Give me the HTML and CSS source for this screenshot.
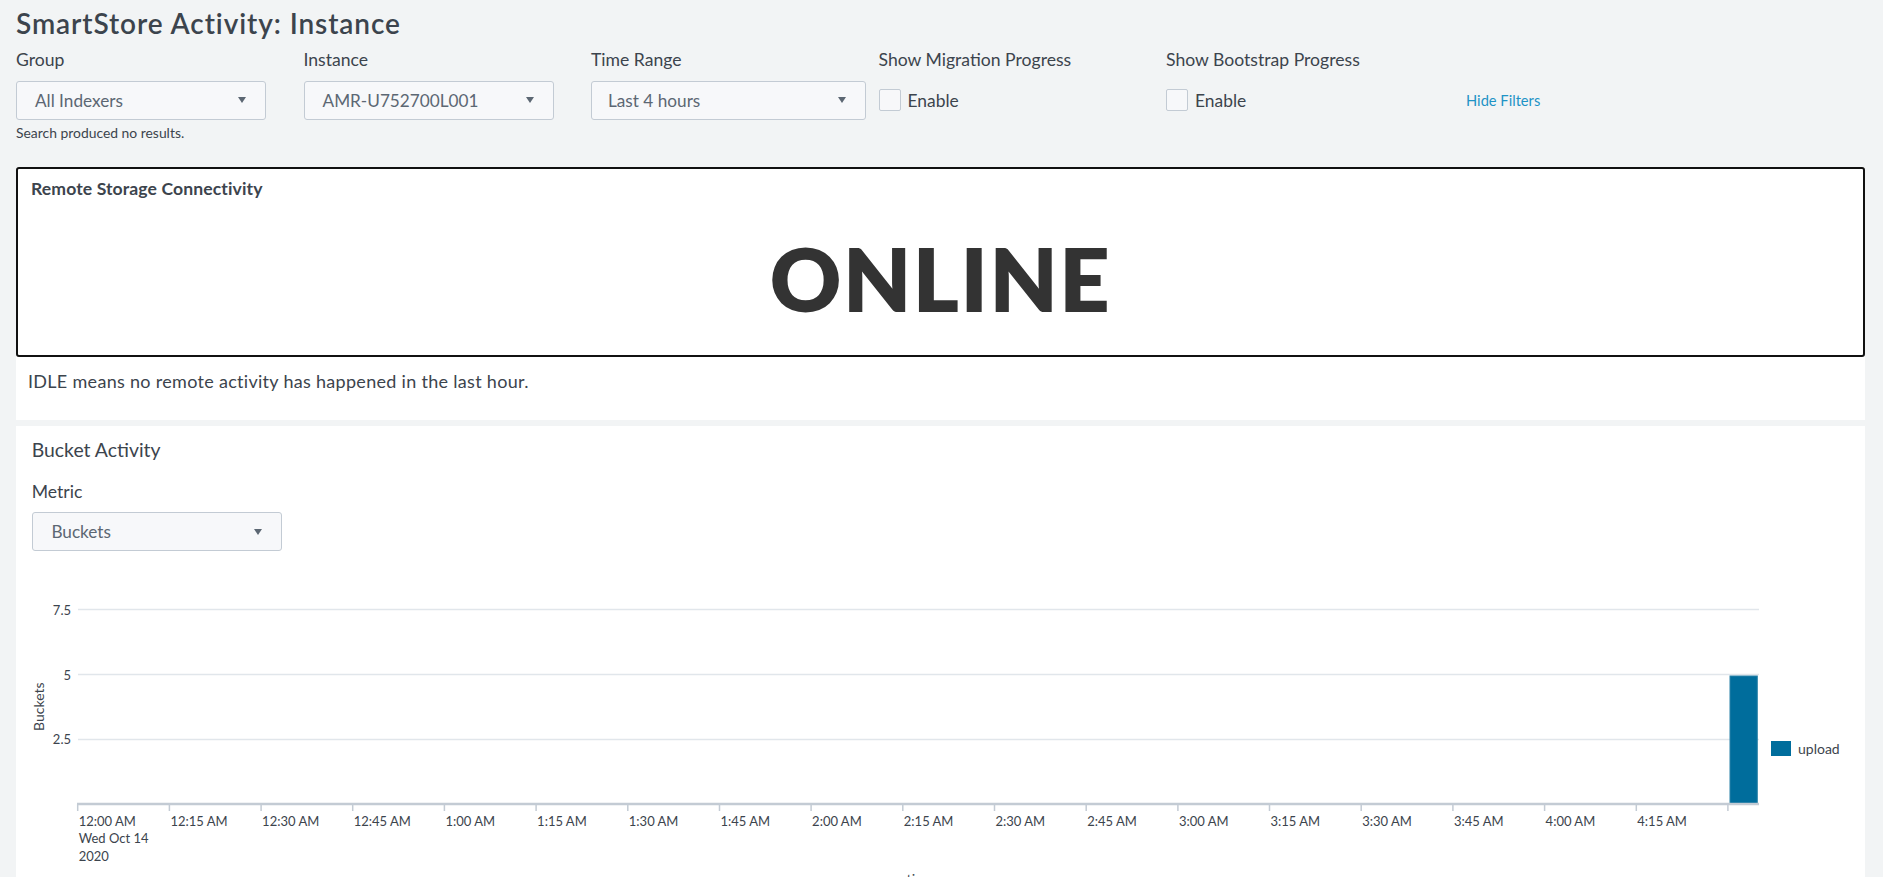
FILE: index.html
```html
<!DOCTYPE html>
<html lang="en">
<head>
<meta charset="utf-8">
<title>SmartStore Activity: Instance</title>
<link rel="stylesheet" href="styles.css">
</head>
<body>
<div class="page">
  <h1 class="title">SmartStore Activity: Instance</h1>

  <div class="filters">
    <div class="input">
      <div class="label">Group</div>
      <div class="dropdown"><span>All Indexers</span><span class="caret"></span></div>
      <div class="msg">Search produced no results.</div>
    </div>
    <div class="input">
      <div class="label">Instance</div>
      <div class="dropdown"><span>AMR-U752700L001</span><span class="caret"></span></div>
    </div>
    <div class="input">
      <div class="label">Time Range</div>
      <div class="dropdown dropdown--wide"><span>Last 4 hours</span><span class="caret"></span></div>
    </div>
    <div class="input">
      <div class="label">Show Migration Progress</div>
      <div class="check"><span class="box"></span><span>Enable</span></div>
    </div>
    <div class="input">
      <div class="label">Show Bootstrap Progress</div>
      <div class="check"><span class="box"></span><span>Enable</span></div>
    </div>
    <div class="hide-wrap"><a class="hide-filters">Hide Filters</a></div>
  </div>

  <section class="panel panel--status">
    <div class="single">
      <div class="single-title">Remote Storage Connectivity</div>
      <div class="single-value">ONLINE</div>
    </div>
    <p class="desc">IDLE means no remote activity has happened in the last hour.</p>
  </section>

  <section class="panel panel--chart">
    <h2 class="panel-title">Bucket Activity</h2>
    <div class="label label--metric">Metric</div>
    <div class="dropdown dropdown--metric"><span>Buckets</span><span class="caret"></span></div>
    <svg class="chart" width="1849" height="330" viewBox="0 0 1849 330">
      <g class="grid">
        <line x1="62" y1="39.5" x2="1743" y2="39.5"/>
        <line x1="62" y1="104.5" x2="1743" y2="104.5"/>
        <line x1="62" y1="169.5" x2="1743" y2="169.5"/>
      </g>
      <g class="ylab">
        <text x="55" y="45.3">7.5</text>
        <text x="55" y="110">5</text>
        <text x="55" y="174">2.5</text>
      </g>
      <text class="ytitle" transform="translate(28 136.7) rotate(-90)">Buckets</text>
      <rect class="bar" x="1714" y="106" width="27.3" height="128"/>
      <line class="axis" x1="61" y1="234" x2="1743" y2="234"/>
      <g class="ticks">
        <line x1="61.7" y1="234" x2="61.7" y2="241"/>
        <line x1="153.4" y1="234" x2="153.4" y2="241"/>
        <line x1="245.1" y1="234" x2="245.1" y2="241"/>
        <line x1="336.7" y1="234" x2="336.7" y2="241"/>
        <line x1="428.4" y1="234" x2="428.4" y2="241"/>
        <line x1="520.1" y1="234" x2="520.1" y2="241"/>
        <line x1="611.8" y1="234" x2="611.8" y2="241"/>
        <line x1="703.5" y1="234" x2="703.5" y2="241"/>
        <line x1="795.1" y1="234" x2="795.1" y2="241"/>
        <line x1="886.8" y1="234" x2="886.8" y2="241"/>
        <line x1="978.5" y1="234" x2="978.5" y2="241"/>
        <line x1="1070.2" y1="234" x2="1070.2" y2="241"/>
        <line x1="1161.9" y1="234" x2="1161.9" y2="241"/>
        <line x1="1253.5" y1="234" x2="1253.5" y2="241"/>
        <line x1="1345.2" y1="234" x2="1345.2" y2="241"/>
        <line x1="1436.9" y1="234" x2="1436.9" y2="241"/>
        <line x1="1528.6" y1="234" x2="1528.6" y2="241"/>
        <line x1="1620.3" y1="234" x2="1620.3" y2="241"/>
        <line x1="1711.9" y1="234" x2="1711.9" y2="241"/>
      </g>
      <g class="xlab">
        <text x="62.7" y="256">12:00 AM</text>
        <text x="62.7" y="273">Wed Oct 14</text>
        <text x="62.7" y="291">2020</text>
        <text x="154.4" y="256">12:15 AM</text>
        <text x="246.1" y="256">12:30 AM</text>
        <text x="337.7" y="256">12:45 AM</text>
        <text x="429.4" y="256">1:00 AM</text>
        <text x="521.1" y="256">1:15 AM</text>
        <text x="612.8" y="256">1:30 AM</text>
        <text x="704.5" y="256">1:45 AM</text>
        <text x="796.1" y="256">2:00 AM</text>
        <text x="887.8" y="256">2:15 AM</text>
        <text x="979.5" y="256">2:30 AM</text>
        <text x="1071.2" y="256">2:45 AM</text>
        <text x="1162.9" y="256">3:00 AM</text>
        <text x="1254.5" y="256">3:15 AM</text>
        <text x="1346.2" y="256">3:30 AM</text>
        <text x="1437.9" y="256">3:45 AM</text>
        <text x="1529.6" y="256">4:00 AM</text>
        <text x="1621.3" y="256">4:15 AM</text>
      </g>
      <text class="xtitle" x="901" y="314">_time</text>
      <rect class="legend-swatch" x="1755" y="171" width="20" height="15"/>
      <text class="legend-text" x="1782" y="183.5">upload</text>
    </svg>
  </section>
</div>
</body>
</html>
```

FILE: styles.css
```css
html, body {
  margin: 0;
  padding: 0;
}

body {
  background: #f2f4f5;
  color: #3c444d;
  font-family: "Lato", "Open Sans", sans-serif;
  overflow: hidden;
}

.page {
  padding: 0 18px 0 16px;
}

.title {
  margin: 0;
  padding-top: 6px;
  font-size: 28px;
  line-height: 34px;
  font-weight: 600;
  letter-spacing: 0.92px;
  color: #3c444d;
}

.filters {
  display: flex;
  align-items: flex-start;
  margin-top: 10px;
}

.input {
  width: 250px;
  margin-right: 37.5px;
  flex: none;
}

.label {
  font-size: 17.6px;
  line-height: 20px;
  margin-bottom: 10.5px;
  color: #3c444d;
  white-space: nowrap;
}

.dropdown {
  display: flex;
  align-items: center;
  justify-content: space-between;
  box-sizing: border-box;
  width: 250px;
  height: 39px;
  padding: 0 19px 0 18px;
  border: 1px solid #c3cbd4;
  border-radius: 3px;
  background: #f7f8fa;
  font-size: 17.2px;
  color: #5c6773;
  white-space: nowrap;
}

.dropdown--wide {
  width: 275px;
  padding-left: 16px;
}

.caret {
  width: 0;
  height: 0;
  border-left: 4.5px solid transparent;
  border-right: 4.5px solid transparent;
  border-top: 6px solid #5c6773;
}

.msg {
  margin-top: 5px;
  font-size: 13.9px;
  line-height: 16px;
  color: #3c444d;
}

.check {
  display: flex;
  align-items: center;
  height: 39px;
  font-size: 17.4px;
  color: #3c444d;
}

.box {
  box-sizing: border-box;
  width: 22px;
  height: 22px;
  margin-right: 7px;
  border: 1px solid #c3cbd4;
  border-radius: 2px;
  background: #f7f8fa;
}

.hide-wrap {
  margin-left: 12.5px;
  padding-top: 30.5px;
  height: 39px;
  display: flex;
  align-items: center;
}

.hide-filters {
  font-size: 14.7px;
  color: #1e93c6;
  cursor: pointer;
}

.panel {
  background: #ffffff;
}

.panel--status {
  margin-top: 26px;
  padding-bottom: 29px;
}

.single {
  box-sizing: border-box;
  height: 190px;
  border: 2px solid #111111;
  border-radius: 3px;
  padding: 10px 13px 0;
}

.single-title {
  font-size: 17.6px;
  line-height: 20px;
  font-weight: 700;
  letter-spacing: 0.1px;
  color: #3c444d;
}

.single-value {
  margin-top: 35.5px;
  text-align: center;
  font-size: 88px;
  line-height: 88px;
  font-weight: 800;
  letter-spacing: 1.5px;
  color: #333333;
}

.desc {
  margin: 14px 0 0 12px;
  font-size: 18px;
  line-height: 20px;
  letter-spacing: 0.3px;
  color: #3c444d;
}

.panel--chart {
  margin-top: 6px;
  padding: 12.8px 0 0 15.7px;
}

.panel-title {
  margin: 0;
  font-size: 19.4px;
  line-height: 23px;
  font-weight: 400;
  color: #3c444d;
}

.label--metric {
  margin-top: 20.6px;
}

.dropdown--metric {
  padding-left: 18.7px;
}

.chart {
  display: block;
  margin: 19px 0 0 -15.7px;
  font-family: "Lato", "Open Sans", sans-serif;
}

.grid line {
  stroke: #e1e6eb;
  stroke-width: 1.5;
}

.axis {
  stroke: #c3cbd4;
  stroke-width: 2.5;
}

.ticks line {
  stroke: #c3cbd4;
  stroke-width: 1.5;
}

.ylab text {
  font-size: 13px;
  fill: #3c444d;
  text-anchor: end;
}

.xlab text {
  font-size: 13px;
  fill: #3c444d;
}

.ytitle {
  font-size: 14px;
  fill: #3c444d;
  text-anchor: middle;
}

.xtitle {
  font-size: 14px;
  fill: #3c444d;
  text-anchor: middle;
}

.bar {
  fill: #006d9c;
  stroke: #2a82a8;
  stroke-width: 1;
}

.legend-swatch {
  fill: #006d9c;
}

.legend-text {
  font-size: 14px;
  fill: #3c444d;
}
```
